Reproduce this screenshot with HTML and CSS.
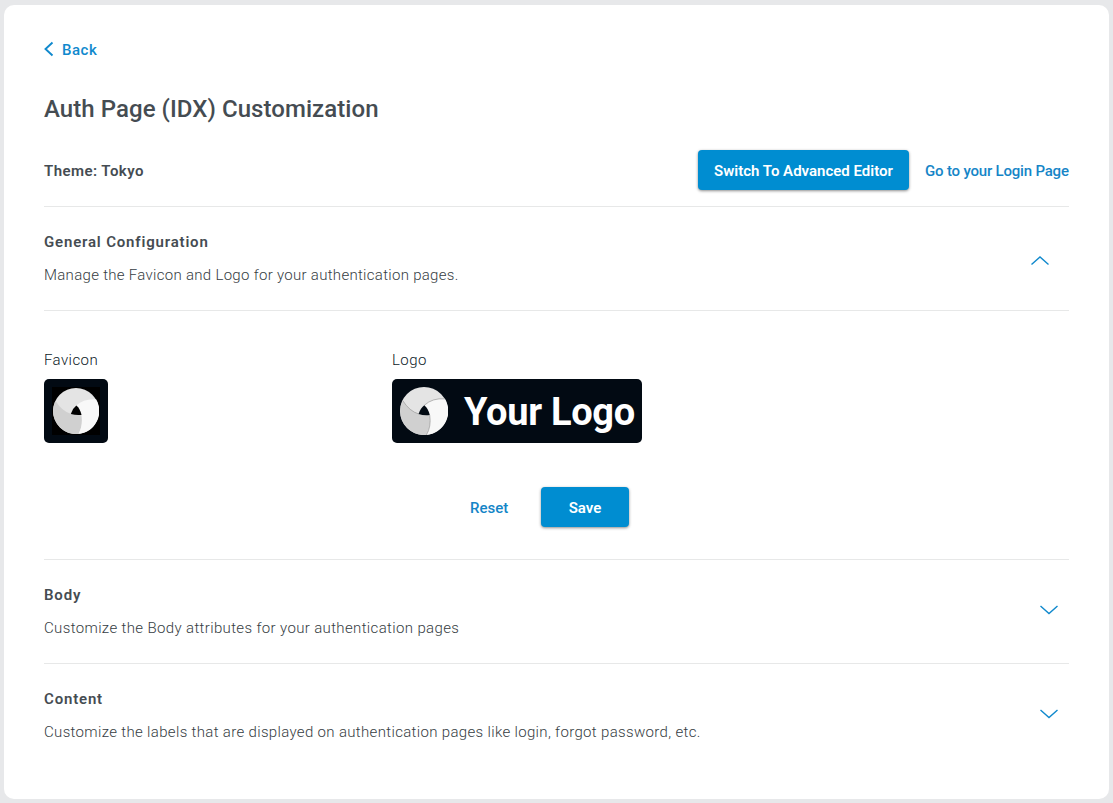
FILE: index.html
```html
<!DOCTYPE html>
<html lang="en">
<head>
<meta charset="utf-8">
<title>Auth Page (IDX) Customization</title>
<link rel="stylesheet" href="styles.css">
</head>
<body>
<svg width="0" height="0" class="defs" aria-hidden="true">
  <symbol id="swirl" viewBox="0 0 142 142">
    <circle cx="71" cy="71" r="71" fill="#e4e4e4"/>
    <path d="M8 40Q28 72 56 80Q70 84 88 83Q93 118 78 142A71 71 0 0 1 8 40Z" fill="#d0d0d0"/>
    <path d="M133 35A71 71 0 0 1 78 142Q93 118 88 83Q84 64 72 54Q96 32 133 35Z" fill="#f8f8f8"/>
  </symbol>
</svg>
<main class="card">
  <a class="back"><svg width="10" height="16" viewBox="0 0 10 16"><path d="M8.500 1.500L1.500 8L8.500 14.500"/></svg><span class="t-back">Back</span></a>
  <h1 class="title">Auth Page (IDX) Customization</h1>
  <div class="theme-row">
    <strong class="theme">Theme: Tokyo</strong>
    <div class="actions">
      <button class="btn switch">Switch To Advanced Editor</button>
      <a class="link login">Go to your Login Page</a>
    </div>
  </div>
  <section class="panel">
    <div>
      <h2 class="heading">General Configuration</h2>
      <p class="desc d-general">Manage the Favicon and Logo for your authentication pages.</p>
    </div>
    <svg class="chev up" width="20" height="12" viewBox="0 0 20 12"><path d="M1.500 9.500L10 2L18.500 9.500"/></svg>
  </section>
  <section class="config">
    <div class="assets">
      <div class="asset">
        <div class="label">Favicon</div>
        <div class="tile fav-tile"><div class="fav-bg"><svg width="46" height="46" viewBox="0 0 142 142"><use href="#swirl" width="142" height="142"/><path class="fav-hole" d="M72 54Q84 64 88 83Q70 85 55 80Q60 63 72 54Z"/></svg></div></div>
      </div>
      <div class="asset">
        <div class="label">Logo</div>
        <div class="tile logo-tile">
          <svg width="48" height="48" viewBox="0 0 142 142"><use href="#swirl" width="142" height="142"/><path class="seams" d="M8 40Q28 72 56 80M133 35Q96 32 72 54M78 142Q93 118 88 83"/><path class="hole" d="M72 54Q84 64 88 83Q70 85 55 80Q60 63 72 54Z"/></svg>
          <span class="wordmark">Your Logo</span>
        </div>
      </div>
    </div>
    <div class="form-actions">
      <a class="link reset">Reset</a>
      <button class="btn save">Save</button>
    </div>
  </section>
  <section class="panel">
    <div>
      <h2 class="heading">Body</h2>
      <p class="desc d-body">Customize the Body attributes for your authentication pages</p>
    </div>
    <svg class="chev" width="20" height="12" viewBox="0 0 20 12"><path d="M1.500 2L10 9.500L18.500 2"/></svg>
  </section>
  <section class="panel last">
    <div>
      <h2 class="heading">Content</h2>
      <p class="desc d-content">Customize the labels that are displayed on authentication pages like login, forgot password, etc.</p>
    </div>
    <svg class="chev" width="20" height="12" viewBox="0 0 20 12"><path d="M1.500 2L10 9.500L18.500 2"/></svg>
  </section>
</main>
</body>
</html>
```
FILE: styles.css
```css
* { box-sizing: border-box; }
body { margin: 0; padding: 5px 4px 4px; height: 803px; background: #e7e8ea; font-family: Roboto, "Liberation Sans", sans-serif; font-size: 15px; color: #454c52; overflow: hidden; }
.defs { display: none; }
.card { height: 794px; background: #fff; border-radius: 10px; padding: 34px 40px 0; }
h1, h2, p { margin: 0; white-space: nowrap; }
svg { display: block; flex: none; }
.back { display: flex; width: max-content; height: 20px; align-items: center; gap: 8px; color: #1089cd; font-weight: 500; letter-spacing: .5px; }
.t-back { padding-top: 1px; }
.back path, .chev path { fill: none; stroke: #1089cd; stroke-width: 1.9; }
.title { margin-top: 34px; height: 32px; line-height: 32px; font-size: 24px; font-weight: 500; letter-spacing: .06px; }
.theme-row { margin-top: 20px; height: 62px; padding-bottom: 11px; display: flex; align-items: center; justify-content: space-between; border-bottom: 1px solid #e7e8e8; }
.theme { padding-top: 2px; font-weight: 600; white-space: nowrap; letter-spacing: .45px; }
.actions { display: flex; align-items: center; gap: 16px; }
.btn { height: 40px; padding: 1px 0 0; border: 0; border-radius: 4px; background: #008dd1; color: #fff; font: 600 15px Roboto, sans-serif; white-space: nowrap; box-shadow: 0 1px 3px rgba(0, 0, 0, .45); }
.switch { width: 211px; }
.link { color: #1585c7; font-weight: 500; white-space: nowrap; }
.login { width: 144px; padding-top: 2px; letter-spacing: -.19px; }
.panel { height: 104px; display: flex; align-items: flex-start; justify-content: space-between; padding-top: 25px; border-bottom: 1px solid #e7e8e8; }
.last { border-bottom: 0; }
.heading { height: 20px; line-height: 20px; font-size: 15px; font-weight: 600; letter-spacing: .82px; }
.desc { margin-top: 13px; height: 20px; line-height: 20px; font-weight: 300; color: #363d43; }
.d-general { letter-spacing: .3px; }
.d-body { letter-spacing: .36px; }
.d-content { letter-spacing: .335px; }
.chev { margin: 19px 10px 0 0; }
.chev path { stroke-width: 1.4; }
.chev.up { margin: 23px 19px 0 0; }
.config { height: 249px; padding-top: 39px; border-bottom: 1px solid #e7e8e8; }
.assets { display: flex; }
.asset { width: 348px; }
.label { width: max-content; height: 20px; line-height: 20px; color: #0c1926; font-weight: 300; letter-spacing: .43px; }
.tile { margin-top: 9px; height: 64px; border-radius: 5px; background: #020a13; display: flex; align-items: center; }
.fav-tile { width: 64px; justify-content: center; }
.fav-bg { width: 48px; height: 48px; background: #000; display: grid; place-items: center; }
.fav-hole { fill: #000; }
.hole { fill: #020a13; }
.seams { fill: none; stroke: #999; stroke-width: 2; }
.logo-tile { width: 250px; padding-left: 8px; gap: 16px; }
.wordmark { font-size: 38px; font-weight: 700; color: #fff; line-height: 62px; padding-top: 2px; white-space: nowrap; letter-spacing: -.3px; }
.form-actions { display: flex; align-items: center; gap: 32px; margin: 44px 0 0 426px; }
.reset { width: 39px; padding-top: 1px; }
.save { width: 88px; }
```
